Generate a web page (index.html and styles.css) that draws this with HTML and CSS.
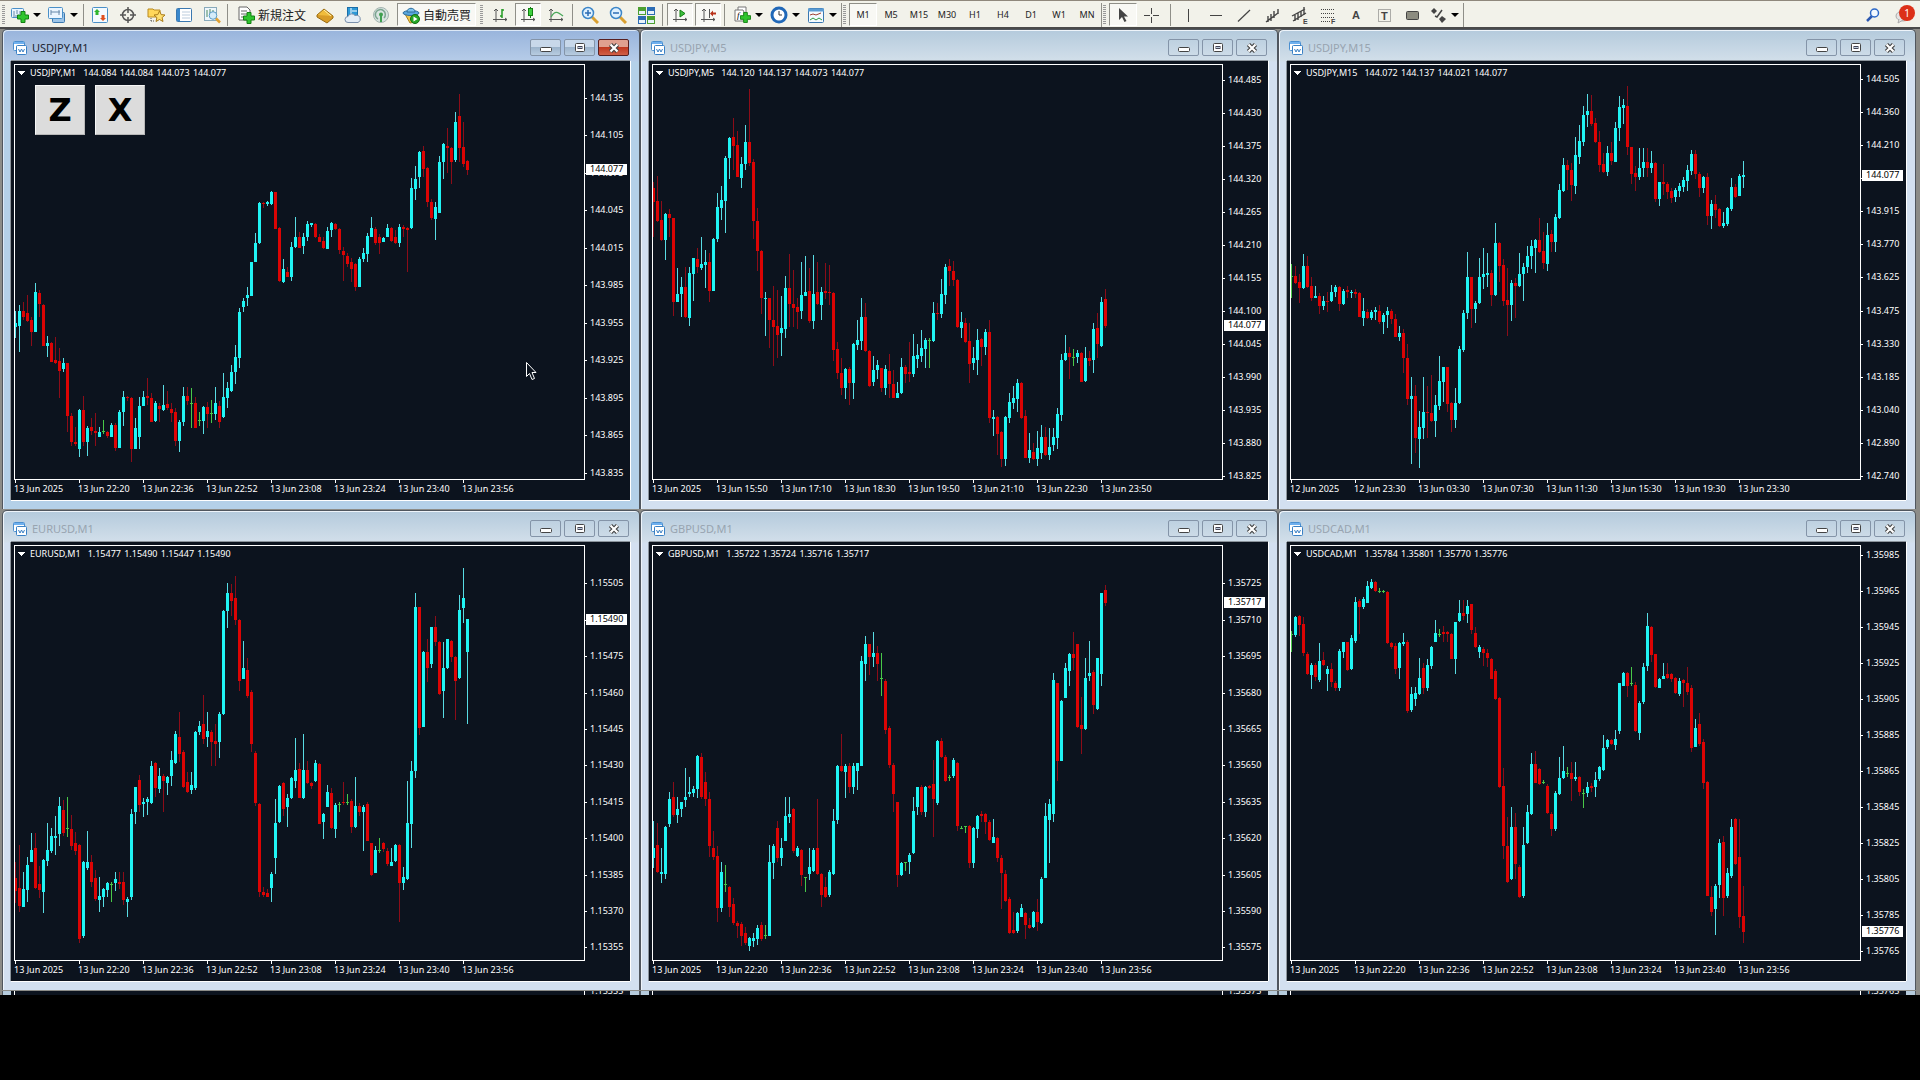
FILE: index.html
```html
<!DOCTYPE html>
<html lang="ja">
<head>
<meta charset="utf-8">
<title>Charts</title>
<link rel="stylesheet" href="styles.css">
</head>
<body>
<svg class="defs" aria-hidden="true">
  <symbol id="win" viewBox="0 0 14 14"><rect x=".5" y=".5" width="11" height="9" rx="1" fill="#fff" stroke="#4a8fd0"/><path d="M1 2h10" stroke="#6fb0ee" stroke-width="2"/><path d="M3 6l1-1 1 1 1-2" stroke="#4a8fd0" fill="none"/><rect x="3.5" y="4.500" width="10" height="9" rx="1" fill="#fff" stroke="#3a80c4"/><path d="M5.500 8l1.500 3 1.500-3 1.500 3 1.500-3" stroke="#3a80c4" fill="none"/></symbol>
  <symbol id="min" viewBox="0 0 12 12"><rect x=".5" y="5.500" width="11" height="4" rx="1" fill="#fff" stroke="#444"/></symbol>
  <symbol id="max" viewBox="0 0 12 12"><rect x="1.500" y="1.500" width="9" height="8" rx="1" fill="#fff" stroke="#444"/><rect x="4" y="4.500" width="4" height="2" fill="#bcd" stroke="#445"/></symbol>
  <symbol id="cls" viewBox="0 0 12 12"><path d="M2.500 2.500l7 7M9.500 2.500l-7 7" stroke="#444" stroke-width="4.500"/><path d="M2.500 2.500l7 7M9.500 2.500l-7 7" stroke="#fff" stroke-width="2.200"/></symbol>
  <symbol id="plus" viewBox="0 0 12 12"><path d="M4 .5h4V4h3.500v4H8v3.500H4V8H.5V4H4z" fill="#2fc52f" stroke="#128012"/></symbol>
</svg>
<div class="app">
<header class="toolbar">
  <div class="group g-std">
    <i class="grip"></i>
    <button class="tool drop" aria-label="New chart"><svg viewBox="0 0 18 18"><rect x=".5" y="2.500" width="12" height="9" rx="1" fill="#eaf5ff" stroke="#4a90c8"/><path d="M3 5v4M6 4v4M9 5v3M2 10h8" stroke="#68a"/><use href="#plus" x="6" y="5" width="12" height="12"/></svg><b></b></button>
    <button class="tool drop" aria-label="Profiles"><svg viewBox="0 0 18 18"><rect x="4.500" y="6.500" width="12" height="10" rx="1" fill="#9cc4e8" stroke="#3a78b0"/><rect x=".5" y="1.500" width="14" height="11" rx="1" fill="#eaf5ff" stroke="#4a90c8"/><path d="M3 4v5M3 6h9M11 4v5" stroke="#68a"/></svg><b></b></button>
    <i class="sep"></i>
    <button class="tool" aria-label="Market watch"><svg viewBox="0 0 18 18"><rect x="1.500" y="1.500" width="15" height="15" rx="1" fill="#f4faff" stroke="#4a90c8"/><path d="M6 3l3 3H7.500v3h-3V6H3z" fill="#2fb52f"/><path d="M12 15l-3-3h1.500V9h3v3H15z" fill="#e05020"/></svg></button>
    <button class="tool" aria-label="Data window"><svg viewBox="0 0 18 18"><circle cx="9" cy="9" r="5.500" fill="none" stroke="#555" stroke-width="1.500"/><path d="M9 1v6M9 11v6M1 9h6M11 9h6" stroke="#555" stroke-width="1.500"/></svg></button>
    <button class="tool" aria-label="Navigator"><svg viewBox="0 0 18 18"><path d="M1 3h5l1 1h6v7H1z" fill="#ffd75a" stroke="#b98a20"/><path d="M4 12v4M4 15h4" stroke="#555" stroke-dasharray="1 1"/><path d="M12.500 5l1.700 3.600 3.800.4-2.900 2.600.9 3.900-3.500-2-3.500 2 .9-3.900L7 9l3.800-.4z" fill="#ffe070" stroke="#a97b18"/></svg></button>
    <button class="tool" aria-label="Terminal"><svg viewBox="0 0 18 18"><rect x="1.500" y="2.500" width="15" height="13" rx="1" fill="#fff" stroke="#3a78b0"/><path d="M2 3h3v12H2z" fill="#3a88cc"/><path d="M7 6h8M7 9h8M7 12h8" stroke="#bcd"/></svg></button>
    <button class="tool" aria-label="Strategy tester"><svg viewBox="0 0 18 18"><rect x="1.500" y="1.500" width="12" height="13" fill="#eef6fc" stroke="#8ab"/><path d="M4 4v7M7 3v6M10 4v5" stroke="#4a8a60"/><circle cx="10" cy="9.500" r="3.800" fill="#d4ecfa" stroke="#5a9cc8"/><path d="M13 12.500l4 4" stroke="#e0a030" stroke-width="2.500"/></svg></button>
    <i class="sep"></i>
    <button class="tool wide"><svg viewBox="0 0 18 18"><path d="M2 1h8l3 3v10H2z" fill="#fff" stroke="#666"/><path d="M4 5h6M4 8h7M4 11h4" stroke="#666"/><use href="#plus" x="6" y="6" width="12" height="12"/></svg><span>新規注文</span></button>
    <button class="tool" aria-label="MetaEditor"><svg viewBox="0 0 18 18"><path d="M1 9l7-6 9 7-6 5z" fill="#f0bc3c" stroke="#9a6c10"/><path d="M1 9v2l10 6 6-5v-2" fill="#d89c28" stroke="#9a6c10"/><path d="M8 4l7 6" stroke="#fff0b0"/></svg></button>
    <button class="tool" aria-label="VPS"><svg viewBox="0 0 18 18"><rect x="3.500" y="1.500" width="10" height="9" fill="#2d9ad8" stroke="#1b6ea8"/><path d="M7 2v8M8 5h5" stroke="#fff"/><path d="M4 16.500a3 3 0 0 1 0-6 4 4 0 0 1 7-1 3.500 3.500 0 0 1 3 7z" fill="#e4edf6" stroke="#7a90ac"/></svg></button>
    <button class="tool" aria-label="Signals"><svg viewBox="0 0 18 18"><circle cx="9" cy="9" r="7.500" fill="#d8e4e0" stroke="#a4b4b0"/><path d="M6 13a5 5 0 1 1 6-1" fill="none" stroke="#7ca490" stroke-width="1.500"/><circle cx="9" cy="8.500" r="2" fill="#3fa050"/><path d="M9 9v7" stroke="#3fa050" stroke-width="2"/></svg></button>
    <button class="tool wide on auto"><svg viewBox="0 0 18 18"><path d="M3 8h12l-2 8-5 1z" fill="#f0c850" stroke="#a8801c"/><ellipse cx="9" cy="7" rx="8" ry="2.500" fill="#5aa6dc" stroke="#2c6c9c"/><path d="M5 6c0-5 8-5 8 0z" fill="#7cc0ec" stroke="#2c6c9c"/><circle cx="13" cy="13" r="4.500" fill="#27a827" stroke="#127012"/><path d="M11.500 10.500v5l4-2.500z" fill="#fff"/></svg><span>自動売買</span></button>
  </div>
  <div class="group g-charts">
    <i class="grip"></i>
    <button class="tool" aria-label="Bar chart"><svg viewBox="0 0 18 18"><path d="M5 3v13M2 13.500h14M3 5l2-2 2 2M14 12l2 1.500-2 1.500" fill="none" stroke="#555"/><path d="M11 3v9M11 4h2M9 10h2" stroke="#239a23" stroke-width="1.500"/></svg></button>
    <button class="tool on" aria-label="Candlesticks"><svg viewBox="0 0 18 18"><path d="M5 3v13M2 13.500h14M3 5l2-2 2 2M14 12l2 1.500-2 1.500" fill="none" stroke="#555"/><path d="M11.500 1v11" stroke="#128012"/><rect x="9.500" y="2.500" width="4" height="7" fill="#3fd03f" stroke="#128012"/></svg></button>
    <button class="tool" aria-label="Line chart"><svg viewBox="0 0 18 18"><path d="M4 3v13M2 13.500h14M2 5l2-2 2 2M14 12l2 1.500-2 1.500" fill="none" stroke="#555"/><path d="M4 11c4-7 7-5 12-1" fill="none" stroke="#4aa85a" stroke-width="1.300"/></svg></button>
    <i class="sep"></i>
    <button class="tool" aria-label="Zoom in"><svg viewBox="0 0 18 18"><path d="M11 11l6 6" stroke="#d9a030" stroke-width="3"/><circle cx="7" cy="7" r="5.500" fill="#dff1ff" stroke="#3c86c8" stroke-width="1.500"/><path d="M4 7h6M7 4v6" stroke="#2c6cb4" stroke-width="1.500"/></svg></button>
    <button class="tool" aria-label="Zoom out"><svg viewBox="0 0 18 18"><path d="M11 11l6 6" stroke="#d9a030" stroke-width="3"/><circle cx="7" cy="7" r="5.500" fill="#dff1ff" stroke="#3c86c8" stroke-width="1.500"/><path d="M4 7h6" stroke="#2c6cb4" stroke-width="1.500"/></svg></button>
    <button class="tool" aria-label="Tile windows"><svg viewBox="0 0 18 18"><rect x="1" y="1" width="8" height="8" fill="#4ca030"/><rect x="10" y="1" width="8" height="8" fill="#2c6cb4"/><rect x="1" y="10" width="8" height="8" fill="#2c6cb4"/><rect x="10" y="10" width="8" height="8" fill="#4ca030"/><path d="M2 5h6v3H2zM11 5h6v3h-6zM2 14h6v3H2zM11 14h6v3h-6z" fill="#e8f2fa"/></svg></button>
    <i class="sep"></i>
    <button class="tool on" aria-label="Auto scroll"><svg viewBox="0 0 18 18"><path d="M5 3v13M2 13.500h14M3 5l2-2 2 2M14 12l2 1.500-2 1.500" fill="none" stroke="#555"/><path d="M9 4v7l5-3.500z" fill="#3fc03f" stroke="#128012"/></svg></button>
    <button class="tool on" aria-label="Chart shift"><svg viewBox="0 0 18 18"><path d="M5 3v13M2 13.500h14M3 5l2-2 2 2M14 12l2 1.500-2 1.500M10.500 3v9" fill="none" stroke="#555"/><path d="M11 7.500l3-3v2h3v2h-3v2z" fill="#b83018"/></svg></button>
    <i class="sep"></i>
    <button class="tool drop pad" aria-label="Indicators"><svg viewBox="0 0 18 18"><path d="M5 1h8v10H5z" fill="#fff" stroke="#777"/><path d="M2 4h8l1 2v9H2z" fill="#fff" stroke="#777"/><text x="4" y="12" class="fx">f</text><use href="#plus" x="7" y="6" width="11" height="11"/></svg><b></b></button>
    <button class="tool drop" aria-label="Periods"><svg viewBox="0 0 18 18"><circle cx="9" cy="9" r="7" fill="#fff" stroke="#2068b8" stroke-width="3"/><path d="M9 5v4h3" stroke="#333" fill="none"/></svg><b></b></button>
    <button class="tool drop" aria-label="Templates"><svg viewBox="0 0 18 18"><rect x="1.500" y="2.500" width="15" height="14" rx="1" fill="#f4faff" stroke="#3a78b0"/><path d="M1 4h16" stroke="#5a9cd4" stroke-width="3"/><path d="M3 9l3-1 3 1 5-2" stroke="#a04030" fill="none"/><path d="M3 14l3-2 3 2 3-2 3 2" stroke="#2f9a3f" fill="none"/></svg><b></b></button>
  </div>
  <i class="sep edge"></i>
  <div class="group g-tf">
    <i class="grip"></i>
    <button class="tool tf on">M1</button><button class="tool tf">M5</button><button class="tool tf">M15</button><button class="tool tf">M30</button><button class="tool tf">H1</button><button class="tool tf">H4</button><button class="tool tf">D1</button><button class="tool tf">W1</button><button class="tool tf">MN</button>
  </div>
  <i class="sep edge"></i>
  <div class="group g-draw">
    <i class="grip"></i>
    <button class="tool on" aria-label="Cursor"><svg viewBox="0 0 18 18"><path d="M5 2v12l3-3 2.500 5 2-1L10 10.500h4z" fill="#444"/></svg></button>
    <button class="tool" aria-label="Crosshair"><svg viewBox="0 0 18 18"><path d="M9.500 2v6M9.500 11v6M2 9.500h6M11 9.500h6" stroke="#444"/></svg></button>
    <i class="sep"></i>
    <button class="tool" aria-label="Vertical line"><svg viewBox="0 0 18 18"><path d="M9.500 3v13" stroke="#444"/></svg></button>
    <button class="tool" aria-label="Horizontal line"><svg viewBox="0 0 18 18"><path d="M3 9.500h12" stroke="#444"/></svg></button>
    <button class="tool" aria-label="Trend line"><svg viewBox="0 0 18 18"><path d="M3 15.500L15 4" stroke="#444" stroke-width="1.200"/></svg></button>
    <button class="tool" aria-label="Channel"><svg viewBox="0 0 18 18"><path d="M3 16l12-9M5 10v6M8 8v7M11 5v7M15 3v5" stroke="#444" stroke-width="1.400"/></svg></button>
    <button class="tool" aria-label="Equidistant channel"><svg viewBox="0 0 18 18"><path d="M1 10L14 3M2 15L15 7M4 9v6M7 7v7M10 5v6M13 1v8" stroke="#444" stroke-width="1.400"/><text x="12" y="18" class="sub">E</text></svg></button>
    <button class="tool" aria-label="Fibonacci"><svg viewBox="0 0 18 18"><path d="M2 3.500h14M2 7.500h14M2 11.500h14M2 15.500h9" stroke="#444" stroke-dasharray="1 1"/><text x="12" y="18" class="sub">F</text></svg></button>
    <button class="tool glyph">A</button>
    <button class="tool" aria-label="Text label"><svg viewBox="0 0 18 18"><rect x="3.500" y="3.500" width="12" height="12" fill="none" stroke="#666" stroke-dasharray="1 1"/><text x="6" y="14" class="tt">T</text></svg></button>
    <button class="tool" aria-label="Rectangle"><svg viewBox="0 0 18 18"><rect x="3.500" y="5.500" width="12" height="8" rx="1" fill="#8c8c80" stroke="#444"/></svg></button>
    <button class="tool drop arrows" aria-label="Arrows"><svg viewBox="0 0 18 18"><path d="M5 2l3 3-3 3-3-3z" fill="#444"/><path d="M13 10l4 3-4 4-3-4z" fill="#444"/><path d="M6 10l2 1 5-7" fill="none" stroke="#444" stroke-width="1.500"/></svg><b></b></button>
    <i class="sep edge"></i>
  </div>
  <div class="group g-right">
    <button class="tool" aria-label="Search"><svg viewBox="0 0 18 18"><path d="M3 15l5-5" stroke="#2c58b0" stroke-width="2.500"/><circle cx="10.500" cy="7" r="4" fill="#f4faff" stroke="#2c68c8" stroke-width="1.500"/></svg></button>
    <button class="tool news" aria-label="Messages"><svg viewBox="0 0 18 18"><ellipse cx="8" cy="10" rx="7" ry="5" fill="#e4e4e4" stroke="#aaa"/><path d="M4 13l-1 4 5-3" fill="#e4e4e4" stroke="#aaa"/></svg><span class="badge">1</span></button>
  </div>
</header>
<main class="desk" id="desk"></main>
</div>
<template id="window">
  <section class="window">
    <div class="title"><svg class="ico"><use href="#win"/></svg><h2></h2>
      <button aria-label="Minimize"><svg><use href="#min"/></svg></button><button aria-label="Maximize"><svg><use href="#max"/></svg></button><button class="close" aria-label="Close"><svg><use href="#cls"/></svg></button>
    </div>
    <div class="chart"></div>
  </section>
</template>
<script src="app.js"></script>
</body>
</html>
```
FILE: styles.css
```css
* { box-sizing: border-box; }
html { background: #000; }
body { margin: 0; font-family: "Noto Sans", "Noto Sans CJK JP", sans-serif; color: #222; }
button { font: inherit; color: inherit; border: 0; padding: 0; margin: 0; background: none; }
.defs { position: absolute; width: 0; height: 0; }
.app { min-width: 1500px; }

.toolbar { display: flex; align-items: center; height: 29px; padding: 1px 2px 0; background: #f2f2ea; border-top: 1px solid #8f887c; border-bottom: 2px solid #4a4a4a; }
.group { display: flex; align-items: center; height: 100%; }
.grip { width: 3px; height: 20px; margin-right: 3px; background: repeating-linear-gradient(#999 0 1px, transparent 1px 2px); }
.sep { width: 1px; height: 22px; margin: 0 2px 0 1px; background: #8f8f88; }
.sep.edge { height: 24px; margin: 0 1px 0 0; }
.tool { display: flex; align-items: center; justify-content: center; width: 28px; height: 23px; flex: none; }
.tool svg { width: 18px; height: 18px; flex: none; }
.tool.drop { width: 37px; justify-content: flex-start; padding-left: 3px; gap: 4px; }
.tool.drop b { border: 4px solid transparent; border-top-color: #000; border-bottom: 0; width: 7px; }
.tool.pad { margin-left: 2px; }
.tool.wide { width: auto; font: 12px/18px "Noto Sans CJK JP", sans-serif; gap: 3px; padding: 0 5px 0 7px; }
.tool.on { background: #f8f8f4; border: 1px solid #8f8f88; border-right-color: #fff; border-bottom-color: #fff; }
.g-charts .tool.on { width: 26px; margin: 0 1px; }
.tool.auto { padding: 0 4px; margin-left: 2px; }
.tool.tf { font-size: 9px; line-height: 12px; }
.tool.glyph { font: bold 11px/14px "Liberation Sans", sans-serif; color: #444; }
.g-charts { margin-left: 4px; }
.g-charts .sep { margin: 0 3px 0 2px; }
.g-draw .sep:not(.edge) { margin: 0 3px 0 5px; }
.g-right { margin-left: auto; }
.news { position: relative; margin-left: 3px; }
.badge { position: absolute; top: 2px; right: 3px; width: 16px; height: 16px; border-radius: 8px; background: #dc3018; color: #fff; font-size: 10px; line-height: 16px; text-align: center; }
.fx { font: italic 9px "Liberation Serif", serif; }
.sub { font: bold 7px "Liberation Sans", sans-serif; fill: #444; }
.tt { font: bold 11px "Liberation Sans", sans-serif; fill: #444; }

.desk { display: grid; grid-template-columns: repeat(3, 1fr); row-gap: 1px; padding: 0 4px 0 2px; background: #8c8c88; }
.window { min-width: 0; padding: 0 9px 9px 8px; border-style: solid; border-color: #50565e; border-width: 1px 1px 0 1px; border-radius: 5px 5px 0 0; background: linear-gradient(#b4cadc 0, #d2dfea 31px, #d3e0f0 32px); color: #98a4b0; box-shadow: inset 1px 1px 0 #eef4fa; }
.window.active { background: linear-gradient(#98b4dc 0, #b6cce8 31px, #b4d0e8 32px); color: #1c2430; box-shadow: inset 1px 1px 0 #dce8f6; }
.title { display: flex; align-items: center; gap: 3px; height: 31px; padding: 4px 1px 0 2px; }
.title .ico { width: 14px; height: 14px; margin-right: 2px; }
.title h2 { flex: 1; margin: 0; font-size: 11px; line-height: 16px; font-weight: 400; }
.title button { display: grid; place-items: center; width: 31px; height: 17px; border: 1px solid #8494a8; border-radius: 2px; }
.title button svg { width: 12px; height: 12px; }
.active .title button { background: linear-gradient(#c8d8ea 50%, #9cb4cc 50%, #b8cce0); }
.active .title .close { background: linear-gradient(#e0a090 50%, #c03820 50%, #d06048); border-color: #582020; }
.chart { position: relative; height: 439px; background: #0c131e; box-shadow: 0 1px 0 #fff, 1px 0 0 #fff, 0 -1px 0 #8c949c, -1px 0 0 #8c949c; }
.chart > svg { display: block; width: 100%; height: 100%; shape-rendering: crispEdges; font-size: 9px; }
.chart text { fill: #fff; }
.frame { fill: none; stroke: #fff; }
.up { fill: #20f4f4; }
.up.wick { fill: #58dce4; }
.down { fill: #dc0404; }
.down.wick { fill: #8c0c18; }
.flat { fill: #48c848; }
.tag { fill: #fff; }
.chart text.now { fill: #000; }
.keys { position: absolute; left: 24px; top: 24px; display: flex; gap: 10px; }
.keys button { width: 50px; height: 50px; background: #dcdcdc; border: 1px solid #f6f6f6; border-right-color: #b8b8b8; border-bottom-color: #b8b8b8; font: bold 32px/48px "DejaVu Sans", sans-serif; color: #000; }
.chart .pointer { position: absolute; left: 514px; top: 300px; width: 13px; height: 20px; shape-rendering: auto; }
.window.peek { padding-bottom: 0; border-top: 0; border-radius: 0; box-shadow: none; }
.peek .chart { height: 4px; overflow: hidden; box-shadow: none; }
```
FILE: app.js
```js
// Candle: direction (u/d/g) followed by high, body top, body bottom, low, in thirds of a pixel.
const charts = [
  { name: 'USDJPY,M1', ohlc: '144.084 144.084 144.073 144.077', active: true, base: 93, y0: 203, step: 112.5,
    prices: '144.135 144.105 144.075 144.045 144.015 143.985 143.955 143.925 143.895 143.865 143.835', now: ['144.077', 418],
    dates: ['13 Jun 2025', '13 Jun 22:20', '13 Jun 22:36', '13 Jun 22:52', '13 Jun 23:08', '13 Jun 23:24', '13 Jun 23:40', '13 Jun 23:56'],
    data: `u843,880,890,925 u825,843,887,965 d815,843,860,870 d795,850,872,875 d860,870,905,947 u760,786,907,907 d780,788,822,862 d822,825,947,947 u918,938,947,982 d937,940,995,997 d920,990,1000,1003 d953,992,1022,1103 u985,998,1018,1025 d998,1000,1158,1205 d1148,1158,1235,1247 d1190,1235,1243,1247 u1137,1140,1256,1280 d1098,1140,1235,1247 u1187,1195,1235,1277 d1165,1192,1203,1215 d1150,1202,1210,1247 u1190,1205,1220,1220 g1170,1203,1205,1212 d1202,1206,1218,1225 u1180,1185,1220,1222 d1178,1185,1253,1262 u1140,1145,1253,1253 u1083,1102,1145,1187 d1098,1100,1103,1113 d1100,1103,1256,1297 u1165,1193,1256,1256 u1100,1128,1222,1256 u1082,1102,1128,1128 d1045,1098,1103,1125 d1090,1103,1175,1175 u1112,1118,1172,1175 d1118,1128,1138,1175 u1065,1125,1140,1142 d1082,1122,1135,1140 d1118,1137,1148,1175 d1133,1145,1233,1247 u1170,1175,1233,1265 u1072,1098,1175,1188 d1070,1098,1113,1125 g1075,1118,1120,1193 d1100,1120,1193,1193 g1145,1170,1172,1187 u1128,1132,1172,1212 d1115,1130,1152,1193 g1110,1150,1152,1178 u1070,1120,1152,1170 d1113,1128,1175,1193 u1030,1102,1162,1165 u1055,1075,1103,1133 u1005,1027,1082,1085 u945,982,1027,1062 u835,847,985,1015 u803,812,830,845 u770,795,803,828 u695,697,797,797 u610,640,697,697 u515,520,640,642 d515,518,522,535 u513,517,522,527 u482,487,523,525 d485,487,597,597 d590,595,752,755 u688,717,755,760 d710,725,740,742 u635,650,740,752 u560,620,650,655 d605,620,653,655 u608,622,647,672 u573,582,622,632 u578,580,584,592 d580,582,622,625 d613,620,635,637 d622,632,655,657 u590,602,657,657 u577,580,600,622 d578,582,597,600 d595,598,660,672 d650,662,675,752 d670,677,702,710 d685,697,718,755 d698,702,772,782 u680,688,770,770 u655,670,688,697 u610,618,672,695 u560,595,620,622 d592,597,640,645 d613,620,640,672 u622,625,637,637 u583,595,620,620 d590,595,632,635 d600,622,640,642 u583,590,640,650 d585,590,598,620 d590,595,600,725 u443,475,595,597 u407,447,477,510 u362,365,440,475 d348,363,417,440 d412,415,517,530 d508,515,565,570 u515,530,567,630 u378,395,548,550 u338,342,395,447 d295,348,355,430 d350,353,395,463 u247,275,390,397 d193,258,353,395 d275,352,402,412 d390,393,420,435` },
  { name: 'USDJPY,M5', ohlc: '144.120 144.137 144.073 144.077', base: 93, y0: 151, step: 99,
    prices: '144.485 144.430 144.375 144.320 144.265 144.210 144.155 144.100 144.045 143.990 143.935 143.880 143.825', now: ['144.077', 886],
    dates: ['13 Jun 2025', '13 Jun 15:50', '13 Jun 17:10', '13 Jun 18:30', '13 Jun 19:50', '13 Jun 21:10', '13 Jun 22:30', '13 Jun 23:50'],
    data: `d457,473,515,620 d437,513,572,575 d512,570,630,632 u548,552,630,690 d537,552,565,620 d563,565,815,857 u715,792,815,817 u740,770,793,860 d712,772,862,865 u710,730,865,887 u683,685,732,812 d655,687,710,730 u620,702,715,720 u660,697,705,773 d670,697,783,815 u625,627,783,783 u490,532,627,637 u467,510,533,570 u378,385,512,608 u320,325,385,447 d263,320,347,420 d303,345,442,442 u380,402,443,473 u285,337,403,420 d177,337,400,408 d388,397,573,628 d535,573,663,722 d660,663,805,853 u787,803,807,918 d803,805,870,953 d768,870,890,1008 d780,888,915,985 u797,895,910,978 u738,775,897,925 d672,775,822,890 d720,822,833,890 d805,830,845,897 u697,795,843,868 u677,785,797,797 d715,783,873,880 u675,792,873,898 d697,787,823,825 u770,785,825,870 d700,783,788,808 d705,785,788,825 d787,788,960,992 d935,958,1030,1048 d985,1028,1073,1095 u1013,1017,1073,1108 d1010,1017,1058,1125 u940,943,1058,1107 u870,930,945,960 u803,862,933,960 d820,862,963,967 d960,963,1067,1070 u977,1020,1055,1067 u990,1005,1020,1047 d1013,1015,1073,1085 u1005,1017,1073,1095 d973,1022,1062,1103 d1020,1062,1103,1105 u1055,1090,1103,1103 u985,1012,1090,1092 d1005,1010,1032,1060 d935,1025,1032,1055 u912,978,1032,1040 u942,975,987,1015 u900,955,977,995 u925,930,957,1013 g925,930,933,1013 u815,850,932,937 d820,848,852,870 u747,793,852,863 u703,712,795,822 d688,708,723,768 d693,723,750,768 d748,750,890,893 u845,877,893,925 d863,878,935,940 d880,933,1002,1058 u950,985,1000,1020 u898,930,990,1035 d925,928,950,1007 u898,905,950,975 d870,905,1165,1180 u1140,1160,1168,1217 d1158,1160,1212,1275 d1203,1207,1287,1310 u1158,1162,1287,1307 u1088,1117,1163,1178 u1067,1105,1118,1137 u1047,1060,1108,1145 d1055,1060,1163,1168 d1140,1158,1283,1285 u1210,1260,1285,1298 d1240,1265,1287,1290 u1203,1255,1287,1307 u1185,1222,1270,1287 d1190,1222,1275,1278 u1193,1252,1275,1290 u1195,1220,1245,1263 u1135,1153,1225,1258 u973,990,1155,1172 u915,970,990,992 d950,970,982,1048 g957,982,984,1007 u960,970,982,998 d965,970,1055,1057 u950,985,1052,1055 d963,985,992,1008 u880,897,990,1030 d850,893,943,985 u800,815,947,950 d777,807,888,893` },
  { name: 'USDJPY,M15', ohlc: '144.072 144.137 144.021 144.077', base: 93, y0: 146, step: 99.4,
    prices: '144.505 144.360 144.210 144.065 143.915 143.770 143.625 143.475 143.330 143.185 143.040 142.890 142.740', now: ['144.077', 436],
    dates: ['12 Jun 2025', '12 Jun 23:30', '13 Jun 03:30', '13 Jun 07:30', '13 Jun 11:30', '13 Jun 15:30', '13 Jun 19:30', '13 Jun 23:30'],
    data: `g703,738,740,803 d708,738,758,762 d732,757,773,820 u672,708,773,778 d678,708,770,775 d740,768,803,812 u768,798,803,803 d790,798,827,853 u798,812,828,840 d785,812,815,845 u765,787,813,817 u765,770,787,800 d767,770,822,842 u778,782,822,825 d767,780,787,805 u780,785,790,803 d778,785,792,805 d787,790,860,862 u805,843,865,887 d838,845,863,868 u840,845,865,870 u830,840,845,870 d825,842,875,882 u850,855,875,912 u830,843,855,895 d838,843,867,882 d853,867,920,922 u887,908,920,932 d898,910,983,1028 d942,983,1107,1125 u1040,1097,1107,1302 d1065,1097,1225,1270 u1143,1192,1227,1313 u1042,1147,1193,1227 d1068,1145,1150,1225 d1035,1150,1172,1175 u1095,1125,1172,1220 u978,1053,1128,1140 u1010,1012,1055,1115 d1010,1012,1122,1145 d1115,1120,1170,1205 u1073,1120,1170,1193 u948,958,1120,1122 u840,850,960,965 u667,742,850,868 d740,742,838,893 u812,820,838,880 u683,740,820,823 u655,732,740,777 u670,730,735,772 d720,730,795,827 u578,640,795,798 d635,638,708,755 d687,705,812,827 d715,810,825,917 u750,760,825,872 d745,760,767,865 u668,732,768,770 u700,712,733,812 u648,678,712,730 u630,648,678,718 u628,630,653,728 d563,630,665,670 d605,663,700,718 u580,615,702,722 d600,613,635,665 u553,562,635,665 u462,480,563,567 u385,405,483,487 d390,405,420,480 d400,420,465,513 u322,375,467,493 u285,333,380,402 u227,255,335,347 u192,243,255,292 d195,243,282,287 d265,280,337,340 d302,337,405,427 d368,403,425,430 u348,368,425,437 d335,370,393,405 u277,293,395,395 u198,232,293,332 u208,225,233,282 d168,227,352,375 d350,352,432,462 d407,430,440,482 u353,413,440,450 u353,397,413,440 d355,397,413,440 u363,398,413,430 d397,398,507,515 u455,457,508,527 d402,457,463,495 d457,463,485,507 d475,483,503,518 u473,480,502,517 u458,467,483,500 u440,450,472,485 u405,420,453,482 u360,373,422,435 d360,373,433,447 d427,433,473,500 u438,440,473,490 d430,442,557,585 u510,523,557,597 d495,522,540,563 d533,537,587,590 u545,580,587,595 u530,533,583,587 u445,472,537,543 d463,470,500,503 u432,438,497,498 u393,435,440,473` },
  { name: 'EURUSD,M1', ohlc: '1.15477 1.15490 1.15447 1.15490', base: 96, y0: 220, step: 109.2,
    prices: '1.15505 1.15490 1.15475 1.15460 1.15445 1.15430 1.15415 1.15400 1.15385 1.15370 1.15355', now: ['1.15490', 328],
    dates: ['13 Jun 2025', '13 Jun 22:20', '13 Jun 22:36', '13 Jun 22:52', '13 Jun 23:08', '13 Jun 23:24', '13 Jun 23:40', '13 Jun 23:56'],
    data: `d1055,1105,1142,1180 d1005,1135,1187,1205 u1085,1137,1190,1190 u1040,1065,1140,1175 u968,1020,1057,1057 d968,1015,1133,1137 d1068,1123,1140,1165 u1048,1050,1145,1210 u938,1020,1053,1068 u955,978,1022,1030 u917,978,985,1035 u862,887,972,1007 d870,900,970,978 g862,955,957,980 d915,957,1007,1020 d965,1000,1022,1035 d1003,1005,1288,1300 u1053,1057,1278,1285 u963,1055,1073,1080 d1035,1055,1115,1130 d1080,1105,1168,1173 u1100,1158,1170,1205 u1135,1137,1160,1190 u1115,1118,1140,1160 g1117,1123,1125,1175 u1085,1107,1118,1143 d1085,1115,1123,1137 d1085,1115,1170,1185 u1160,1167,1175,1220 u897,912,1162,1170 u830,832,907,942 d795,810,885,905 u865,875,883,920 u862,867,877,915 u752,767,878,882 d757,760,835,862 u773,797,838,850 d793,797,813,905 u798,802,818,855 u722,750,797,827 u662,672,760,763 d605,680,732,755 d720,727,830,833 d787,815,847,850 u785,825,840,853 u662,665,833,840 u633,648,665,675 d555,643,687,702 u605,663,682,710 d660,665,695,767 d643,692,702,767 u607,613,695,745 u300,302,613,615 u220,250,302,353 d222,250,272,318 d197,265,330,345 d327,330,513,543 u393,473,507,507 d443,480,558,563 d540,547,703,725 d723,730,880,887 d880,883,1145,1160 d1130,1145,1155,1162 d1137,1150,1160,1162 u1087,1093,1133,1175 u867,940,1043,1093 u825,827,937,940 d815,820,898,918 u853,863,892,950 u800,803,863,868 u685,780,813,833 d760,777,863,865 u672,780,865,868 d752,780,818,823 d815,820,828,838 u750,758,812,815 d760,762,942,942 u910,913,935,987 u825,847,890,890 d833,848,955,957 u880,885,957,985 g877,882,885,907 d817,875,880,885 g852,877,880,885 d867,872,950,970 u802,887,952,953 d880,888,905,917 u885,890,907,1022 d875,882,992,993 d998,1000,1095,1097 u1007,1020,1088,1090 g985,1020,1022,1030 d997,1000,1018,1025 d1015,1022,1062,1067 u1015,1055,1067,1068 u1003,1005,1053,1055 d1003,1005,1118,1235 u1070,1102,1118,1140 u812,940,1108,1110 u752,782,942,1015 u250,290,782,803 d290,292,653,675 u423,425,650,652 d387,425,475,515 u350,352,462,475 d317,352,395,408 d393,395,552,555 u395,473,542,623 u387,388,475,477 d390,393,440,455 d437,440,513,630 u255,300,505,507 u173,265,293,338 u327,328,425,643` },
  { name: 'GBPUSD,M1', ohlc: '1.35722 1.35724 1.35716 1.35717', base: 96, y0: 220, step: 109.2,
    prices: '1.35725 1.35710 1.35695 1.35680 1.35665 1.35650 1.35635 1.35620 1.35605 1.35590 1.35575', now: ['1.35717', 277],
    dates: ['13 Jun 2025', '13 Jun 22:20', '13 Jun 22:36', '13 Jun 22:52', '13 Jun 23:08', '13 Jun 23:24', '13 Jun 23:40', '13 Jun 23:56'],
    data: `u933,1015,1043,1073 d940,1005,1087,1090 u1015,1087,1093,1118 u948,950,1093,1108 u845,867,942,950 d815,862,915,920 u862,897,915,940 u875,877,898,920 u773,862,870,890 u800,845,853,862 u827,838,850,862 u735,737,838,863 d728,742,862,867 d785,815,867,888 d847,867,1007,1040 d963,1013,1042,1050 d1007,1037,1195,1235 u1057,1087,1195,1205 g1065,1123,1125,1145 d1128,1132,1190,1220 d1165,1182,1240,1245 d1233,1240,1247,1285 d1235,1242,1277,1307 d1250,1270,1298,1305 u1282,1285,1307,1322 u1270,1285,1293,1310 u1245,1255,1287,1305 d1235,1245,1288,1292 g1245,1275,1278,1287 u1005,1057,1277,1278 u1003,1007,1058,1108 d933,955,1043,1057 u985,1013,1043,1067 u862,918,992,993 u862,912,920,940 d893,897,1022,1030 u1007,1015,1037,1040 d1018,1020,1095,1127 g1102,1102,1104,1145 u1013,1070,1093,1110 u1015,1020,1083,1085 d867,1015,1093,1095 d1090,1093,1155,1190 d1100,1130,1160,1163 u1080,1085,1155,1160 u897,933,1093,1095 u765,767,930,942 d672,767,782,785 u763,767,787,863 d760,767,832,850 u758,767,832,853 u758,760,782,840 u438,453,767,768 u378,402,462,513 d402,403,440,495 u365,430,440,470 d407,430,462,513 g430,505,508,557 d508,512,660,672 d648,655,765,775 d760,765,853,907 d875,877,1095,1132 u1055,1058,1095,1097 g1057,1057,1059,1082 u1030,1035,1057,1093 u860,903,1030,1032 u830,832,890,915 d825,830,905,915 u828,832,905,920 d825,827,833,838 d750,823,868,982 u690,693,878,885 d683,693,740,745 d735,742,812,815 g795,802,804,812 u743,750,798,803 d755,760,948,963 g948,953,955,957 g948,948,950,970 d945,948,1058,1075 u952,955,1058,1073 u915,918,957,985 d903,912,918,935 d910,913,937,972 d930,935,990,993 u927,980,998,1000 d980,983,1043,1057 d1035,1045,1090,1197 d1080,1092,1173,1177 d1160,1168,1270,1272 d1205,1260,1270,1272 u1205,1210,1263,1270 u1183,1193,1220,1222 d1205,1210,1245,1287 d1225,1245,1253,1257 u1202,1205,1250,1255 d1167,1205,1235,1262 u1102,1107,1240,1242 u878,918,1103,1105 u868,883,930,1060 u490,510,913,935 d518,520,752,812 u570,572,752,753 u460,473,563,565 u430,432,482,528 d365,432,445,480 d402,403,650,653 d560,645,658,732 u445,503,658,660 u393,490,497,513 d480,487,585,613 u443,445,598,600 u248,250,492,527 d225,240,280,287` },
  { name: 'USDCAD,M1', ohlc: '1.35784 1.35801 1.35770 1.35776', base: 96, y0: 136, step: 108,
    prices: '1.35985 1.35965 1.35945 1.35925 1.35905 1.35885 1.35865 1.35845 1.35825 1.35805 1.35785 1.35765', now: ['1.35776', 1264],
    dates: ['13 Jun 2025', '13 Jun 22:20', '13 Jun 22:36', '13 Jun 22:52', '13 Jun 23:08', '13 Jun 23:24', '13 Jun 23:40', '13 Jun 23:56'],
    data: `g362,373,375,425 u317,320,375,380 d315,317,345,378 d320,342,430,437 d425,433,492,495 u460,465,495,537 d460,465,500,513 u400,453,510,515 d425,450,465,468 u467,478,493,542 d460,477,515,530 d513,518,533,543 u418,423,535,543 u395,397,425,445 d395,397,480,482 u375,383,478,480 u262,275,392,398 d268,272,290,373 u262,268,290,298 u212,228,278,280 u207,215,235,238 d213,215,243,245 g235,243,245,250 g240,243,245,250 d242,245,400,403 d397,400,412,417 d400,407,478,493 u397,398,473,507 u368,397,402,407 d390,395,603,608 u532,553,600,605 u532,550,568,588 u443,503,553,555 d460,473,535,553 u447,465,533,543 u407,410,467,478 u330,370,397,397 g358,372,374,380 d348,365,373,397 d362,365,373,397 d370,373,447,448 u335,337,447,493 u270,308,332,335 d270,308,317,330 u270,288,312,338 d282,283,360,373 d350,370,412,413 u405,410,425,445 d412,418,430,467 d418,430,443,472 d443,447,507,508 d478,482,568,570 d560,563,832,833 d773,827,1007,1048 d920,1007,1117,1118 u892,952,1108,1110 d908,952,1062,1108 d1065,1070,1162,1163 u952,1005,1157,1163 u885,907,1000,1002 u730,763,913,915 d723,763,818,820 d775,778,823,825 g810,817,820,823 d823,827,910,912 d905,912,957,978 u843,850,957,962 u742,805,853,855 u708,783,805,807 g772,790,792,800 d757,790,808,873 u757,802,808,812 d797,800,847,857 g837,850,853,893 u817,830,848,860 d818,827,833,847 u785,810,832,860 u768,772,808,812 u675,713,780,782 u687,690,710,717 d687,690,702,705 u660,688,705,720 u518,520,662,672 u487,488,527,528 d487,488,527,560 g470,520,522,528 d515,525,663,667 u573,580,670,690 u460,472,577,582 u310,347,467,483 d347,350,435,455 d432,433,532,533 u505,508,533,533 u460,498,507,508 d460,492,505,507 d488,492,508,517 d500,503,550,552 u503,513,553,558 d507,510,520,590 d472,520,545,555 d525,535,715,725 u628,653,710,712 d610,642,703,707 d687,697,818,837 d812,817,1157,1158 d1128,1160,1205,1218 u1123,1128,1198,1275 u988,1000,1125,1165 d978,995,1163,1218 u1073,1090,1157,1165 u927,952,1097,1103 d923,927,1063,1065 d927,1042,1220,1253 d1128,1217,1265,1298` }
];

const KIND = { u: 'up', d: 'down', g: 'flat' };
const rect = (cls, x, y, w, h) => `<rect class="${cls}" x="${x}" y="${y}" width="${w}" height="${h}"/>`;
const text = (x, y, s, cls = '') => `<text class="${cls}" x="${x}" y="${y}">${s}</text>`;

function plot(c, w, h) {
  const Y = v => Math.round((v - c.base) / 3);
  const right = w - 46, bottom = h - 21;
  let out = '';
  c.data.split(' ').forEach((s, i) => {
    const k = s[0], [hi, top, bot, lo] = s.slice(1).split(',').map(Number).map(Y);
    const x = 4 + 4 * i;
    out += rect(KIND[k] + ' wick', x, hi, 1, Math.max(1, lo - hi));
    out += rect(KIND[k], x - 1, top, 3, Math.max(1, bot - top));
  });
  out += `<path class="frame" d="M3.5 3.5H${right + .5}V${bottom + .5}H3.5Z"/>`;
  c.prices.split(' ').forEach((p, i) => {
    const y = Y(c.y0 + c.step * i);
    out += rect('tag', right + 1, y, 2, 1) + text(right + 6, y + 3, p);
  });
  const ny = Y(c.now[1]);
  out += rect('tag', right + 2, ny - 5, 41, 11) + text(right + 6, ny + 3, c.now[0], 'now');
  c.dates.forEach((d, i) => {
    out += rect('tag', 4 + 64 * i, bottom + 1, 1, 3) + text(3 + 64 * i, bottom + 13, d);
  });
  out += '<path class="tag" d="M7 10h7l-3.500 4z"/>' + text(19, 15, `${c.name}&#160;&#160; ${c.ohlc.replaceAll(' ', ' &#8202;')}`);
  return `<svg>${out}</svg>`;
}

const desk = document.getElementById('desk');
const tpl = document.getElementById('window');
charts.forEach(c => {
  const node = tpl.content.firstElementChild.cloneNode(true);
  node.querySelector('h2').textContent = c.name;
  if (c.active) node.classList.add('active');
  desk.append(node);
  c.el = node.querySelector('.chart');
});
const strips = ['1.15355', '1.35575', '1.35765'].map(label => {
  const node = document.createElement('section');
  node.className = 'window peek';
  node.innerHTML = '<div class="chart"></div>';
  desk.append(node);
  return { label, el: node.firstElementChild };
});

function draw() {
  charts.forEach(c => {
    c.el.innerHTML = plot(c, c.el.clientWidth, c.el.clientHeight);
    if (c.active) c.el.innerHTML +=
      '<div class="keys"><button>Z</button><button>X</button></div>' +
      '<svg class="pointer" viewBox="0 0 13 20"><path d="M1.500 1.500v14l3-3 2.500 6 2.500-1-2.500-6h4z" fill="#0c131e" stroke="#fff"/></svg>';
  });
  strips.forEach(s => {
    const r = s.el.clientWidth - 46;
    s.el.innerHTML = `<svg>${rect('tag', 3, 0, 1, 4)}${rect('tag', r, 0, 1, 4)}${text(r + 6, 3, s.label)}</svg>`;
  });
}
draw();
addEventListener('resize', draw);
```
